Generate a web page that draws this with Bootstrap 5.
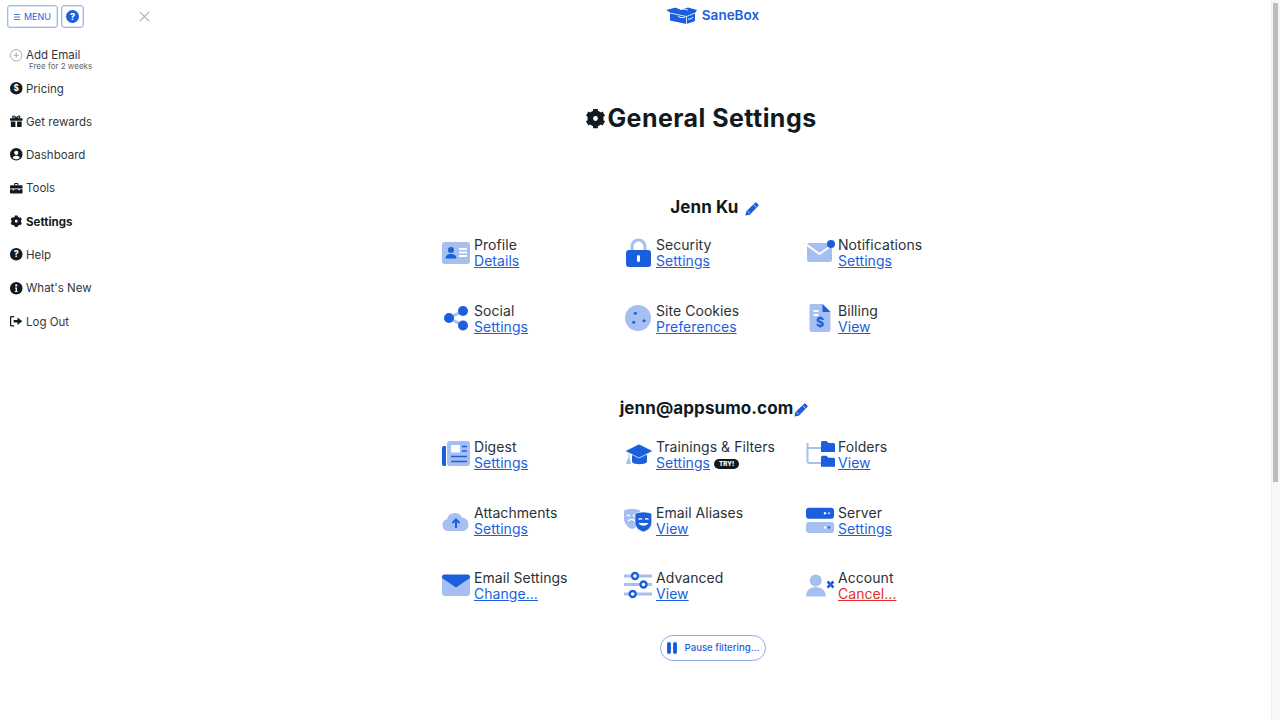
<!DOCTYPE html>
<html lang="en">
<head>
  <meta charset="UTF-8">
  <meta name="viewport" content="width=device-width, initial-scale=1">
  <title>General Settings | SaneBox</title>
  <link href="https://cdn.jsdelivr.net/npm/bootstrap@5.3.3/dist/css/bootstrap.min.css" rel="stylesheet">
  <style>
    html, body { height: 100%; overflow: hidden; }
    body { font-family: Inter, "Liberation Sans", sans-serif; color: #1c252b; background: #fff; }
    .page-wrap { height: 720px; }
    .side-menu { width: 155px; flex: none; padding: 5px 0 0 7px; }
    .main-area { flex: 1 1 auto; min-width: 0; }
    .fake-scroll { width: 9px; flex: none; background: #f7f7f7; border-left: 1px solid #ececec; padding: 3px 2px 0 1px; }
    .fake-scroll div { height: 479px; background: #bdbdbd; }
    .top-btn { height: 23px; border: 1px solid #9db9ef; border-radius: 3px; background: #fff; color: #1b5fdc; font-size: 9px; box-shadow: 0 0 0 1px #dde7fa inset; }
    .menu-btn { width: 51px; }
    .menu-btn svg { margin-right: 4px; }
    .help-btn { width: 23px; margin-left: 3px; }
    .help-dot { width: 13px; height: 13px; border-radius: 50%; background: #1b5fdc; color: #fff; font-size: 9px; font-weight: 800; line-height: 13px; text-align: center; }
    .close-x { margin-left: 55px; margin-top: 6px; }
    .side-list { margin: 14px 0 0 3px; }
    .side-link { display: flex; align-items: center; height: 33.3px; font-size: 11.5px; color: #30383e; text-decoration: none; }
    .side-link svg { width: 12.5px; height: 12.5px; flex: none; margin: 0 3.5px 2px 0; overflow: visible; }
    .side-link.first { height: 30.5px; align-items: flex-start; padding-top: 6px; line-height: 14px; }
    .side-link.first svg { margin-top: 1px; }
    .side-link.now { font-weight: 700; color: #111a20; }
    .free-note { font-size: 8px; color: #60676c; line-height: 8px; margin-left: 3px; }
    .logo-row { height: 31px; padding-top: 7px; padding-right: 1px; }
    .logo-name { font-size: 13.5px; font-weight: 600; color: #1b5fdc; margin-left: 5px; line-height: 17px; }
    .page-title { font-size: 25px; font-weight: 700; color: #111a20; margin: 70px 24px 0 0; line-height: 35px; letter-spacing: .45px; }
    .page-title svg { width: 21px; height: 21px; margin: 0 1px 0 0; vertical-align: -2px; }
    .sect-head { font-size: 17px; font-weight: 700; color: #111a20; line-height: 22px; letter-spacing: .1px; text-align: center; }
    .pen-ic { width: 14px; height: 14px; vertical-align: -3px; color: #1b5fdc; }
    .head-one { margin-top: 60px; padding-left: 3px; }
    .head-one .pen-ic { margin-left: 2px; }
    .head-two { margin-top: 29px; padding-left: 2px; }
    .head-two .pen-ic { margin-left: 1px; }
    .grid-box { width: 546px; margin: 19px auto 0; position: relative; left: 2px; }
    .grid-two { margin-top: 20px; }
    .set-item { height: 65.5px; display: flex; font-size: 14px; line-height: 16.3px; color: #2a3238; letter-spacing: .05px; }
    .set-item svg { width: 28px; height: 28px; flex: none; margin: 2px 4px 0 0; overflow: visible; }
    .set-item a { color: #1b5fdc; display: inline-block; }
    .set-item a.bad { color: #e0332b; }
    .try-tag { display: inline-block; background: #111a20; color: #fff; font-size: 6.3px; font-weight: 800; border-radius: 6px; padding: 0 5px; line-height: 10px; vertical-align: 2px; margin-left: 0; letter-spacing: 0; }
    .pause-btn { width: 106px; height: 26px; border: 1px solid #8fb0ec; border-radius: 13px; background: #fff; color: #1b5fdc; font-size: 9.6px; font-weight: 500; padding: 0; margin-top: -10px; }
    .pause-bar { width: 4px; height: 12px; border-radius: 2px; background: #1b5fdc; margin-right: 2px; }
    .pause-label { padding-top: 1px; }
  </style>
</head>
<body>

<svg width="0" height="0" class="position-absolute">
  <defs>
    <symbol id="gear" viewBox="0 0 24 24"><circle cx="12" cy="12" r="6" fill="none" stroke="currentColor" stroke-width="6.5"/><g stroke="currentColor" stroke-width="5.5"><path d="M12 1v5M12 18v5M2.5 6.5l4.3 2.5M17.2 15l4.3 2.5M2.500 17.500L6.800 15M17.2 9l4.3-2.500"/></g></symbol>
    <symbol id="pencil" viewBox="0 0 16 16"><path d="M.5 15.500l1-5L11.500.8a1.200 1.200 0 0 1 1.700 0l2 2a1.200 1.200 0 0 1 0 1.700L5.500 14.500z" fill="currentColor"/><path d="M9.800 2.800l3.400 3.400M3 10.500l2.500 2.500" stroke="#fff" stroke-width=".8"/></symbol>
  </defs>
</svg>

<div class="page-wrap d-flex">
  <!-- left menu -->
  <aside class="side-menu">
    <div class="d-flex align-items-start">
      <button class="top-btn menu-btn d-flex align-items-center justify-content-center p-0" type="button"><svg width="6" height="6" viewBox="0 0 6 6"><path d="M0 .5h6M0 3h6M0 5.500h6" stroke="#1b5fdc" stroke-width=".8"/></svg>MENU</button>
      <button class="top-btn help-btn d-flex align-items-center justify-content-center p-0" type="button"><span class="help-dot">?</span></button>
      <svg class="close-x" width="11" height="11" viewBox="0 0 11 11"><path d="M.8.800l9.400 9.400M10.200.800.800 10.200" stroke="#a9adb0" stroke-width="1.100"/></svg>
    </div>
    <nav class="side-list">
      <a class="side-link first" href="#">
        <svg viewBox="0 0 12 12"><circle cx="6" cy="6" r="5.500" fill="none" stroke="#8c9195" stroke-width=".7"/><path d="M6 3.500v5M3.500 6h5" stroke="#8c9195" stroke-width=".7"/></svg>
        <span>Add Email<div class="free-note">Free for 2 weeks</div></span>
      </a>
      <a class="side-link" href="#">
        <svg viewBox="0 0 12 12"><circle cx="6" cy="6" r="6" fill="#111a20"/><text x="6" y="8.800" font-size="8" font-weight="700" fill="#fff" text-anchor="middle">$</text></svg>Pricing
      </a>
      <a class="side-link" href="#">
        <svg viewBox="0 0 12 12" fill="#111a20"><rect x="0" y="3" width="12" height="2.500" rx=".4"/><path d="M.8 6.300h4.400V11.500H1.500a.7.700 0 0 1-.7-.7zM6.800 6.300h4.400v4.500a.7.700 0 0 1-.7.700H6.800z"/><path d="M6 3C4.500.300 2.500.500 2.500 1.800S4.500 3 6 3c1.500 0 3.500.100 3.500-1.200S7.500.300 6 3z" fill="none" stroke="#111a20" stroke-width="1"/></svg>Get rewards
      </a>
      <a class="side-link" href="#">
        <svg viewBox="0 0 12 12"><circle cx="6" cy="6" r="6" fill="#111a20"/><circle cx="6" cy="4.600" r="2" fill="#fff"/><path d="M2.600 9.400C3.300 7.800 4.500 7.400 6 7.400s2.700.400 3.400 2C8.500 10.400 7.300 10.900 6 10.900s-2.500-.500-3.400-1.500z" fill="#fff"/></svg>Dashboard
      </a>
      <a class="side-link" href="#">
        <svg viewBox="0 0 12 12" fill="#111a20"><path d="M4 3V1.800C4 1.300 4.300 1 4.800 1h2.400c.500 0 .800.300.800.800V3H7V2H5v1z"/><path d="M1.200 3h9.600c.700 0 1.200.500 1.200 1.200v2H0v-2C0 3.500.500 3 1.200 3zM0 7h2.500v1h1.500V7h4v1h1.500V7H12v3.200c0 .400-.400.800-.8.800H.800C.400 11 0 10.600 0 10.200z"/></svg>Tools
      </a>
      <a class="side-link now" href="#"><svg><use href="#gear"/></svg>Settings</a>
      <a class="side-link" href="#">
        <svg viewBox="0 0 12 12"><circle cx="6" cy="6" r="6" fill="#111a20"/><text x="6" y="9" font-size="8.500" font-weight="800" fill="#fff" text-anchor="middle">?</text></svg>Help
      </a>
      <a class="side-link" href="#">
        <svg viewBox="0 0 12 12"><circle cx="6" cy="6" r="6" fill="#111a20"/><circle cx="6" cy="3.300" r="1.100" fill="#fff"/><path d="M4.800 5.200h1.900v3.400h.7v1H4.700v-1h.7V6.200h-.6z" fill="#fff"/></svg>What's New
      </a>
      <a class="side-link" href="#">
        <svg viewBox="0 0 12 12" fill="none"><path d="M4 1.500H1.300C.8 1.500.6 1.800.6 2.200v7.600c0 .4.200.7.700.7H4" stroke="#111a20" stroke-width="1.200"/><path d="M3.500 4.700h3.700V2.500L11.800 6 7.200 9.500V7.300H3.500z" fill="#111a20"/></svg>Log Out
      </a>
    </nav>
  </aside>

  <main class="main-area text-center">
    <div class="logo-row d-flex justify-content-center">
      <svg width="31" height="17" viewBox="0 0 31 17">
        <path d="M0 3 10 .5 15 3l7-2.500L31 3l-2 3v8l-8.500 3L4 13.500V6z" fill="#1b5fdc"/>
        <path d="M0 3l4 3 16.500 3.500M20.500 9.500 29 6M20.500 9.500V17M10 .5 22 3" stroke="#fff" stroke-width=".8" fill="none"/>
        <path d="M12 9c2 2 5 2 7 1M22 12c2 .4 4-.4 5-2" stroke="#fff" stroke-width="1" fill="none"/>
      </svg>
      <span class="logo-name">SaneBox</span>
    </div>

    <h1 class="page-title"><svg><use href="#gear"/></svg>General Settings</h1>

    <div class="sect-head head-one">Jenn Ku <svg class="pen-ic"><use href="#pencil"/></svg></div>
    <div class="grid-box text-start">
      <div class="row g-0">
        <div class="col-4"><div class="set-item">
          <svg viewBox="0 0 28 28"><rect y="3" width="28" height="22" rx="3" fill="#a5bff0"/><circle cx="9" cy="11" r="3" fill="#1b5fdc"/><path d="M3.500 19.500c.5-3.500 2.500-4.500 5.500-4.500s5 1 5.500 4.500z" fill="#1b5fdc"/><path d="M17 10h8M17 13.500h8M17 17h8" stroke="#fff" stroke-width="1.800"/></svg>
          <div>Profile<br><a href="#">Details</a></div>
        </div></div>
        <div class="col-4"><div class="set-item">
          <svg viewBox="0 0 28 28"><path d="M8 13V7.500a6.500 6.500 0 0 1 13 0V13" fill="none" stroke="#a5bff0" stroke-width="3"/><rect x="2" y="11" width="25" height="17" rx="3" fill="#1b5fdc"/><rect x="13" y="16" width="3" height="7" rx="1.500" fill="#fff"/></svg>
          <div>Security<br><a href="#">Settings</a></div>
        </div></div>
        <div class="col-4"><div class="set-item">
          <svg viewBox="0 0 28 28"><rect x="1" y="4" width="25" height="19" rx="2.500" fill="#a5bff0"/><path d="M1 6l12.500 9L26 6" fill="none" stroke="#fff" stroke-width="2"/><circle cx="25" cy="5" r="4" fill="#1b5fdc"/></svg>
          <div>Notifications<br><a href="#">Settings</a></div>
        </div></div>
        <div class="col-4"><div class="set-item">
          <svg viewBox="0 0 28 28"><path d="M7 13 21 6M7 13l14 7.500" stroke="#a5bff0" stroke-width="3"/><circle cx="7" cy="13" r="5" fill="#1b5fdc"/><circle cx="21" cy="6" r="5" fill="#1b5fdc"/><circle cx="21" cy="20.500" r="5" fill="#1b5fdc"/></svg>
          <div>Social<br><a href="#">Settings</a></div>
        </div></div>
        <div class="col-4"><div class="set-item">
          <svg viewBox="0 0 28 28"><circle cx="14" cy="13" r="13" fill="#a5bff0"/><circle cx="11.300" cy="8.300" r="1.500" fill="#1b5fdc"/><circle cx="20" cy="15.700" r="1.500" fill="#1b5fdc"/><circle cx="9.700" cy="17.300" r="1.500" fill="#1b5fdc"/></svg>
          <div>Site Cookies<br><a href="#">Preferences</a></div>
        </div></div>
        <div class="col-4"><div class="set-item">
          <svg viewBox="0 0 28 28"><g transform="translate(-.5 -1)"><path d="M6 0h11l8 8v18a2 2 0 0 1-2 2H6a2 2 0 0 1-2-2V2a2 2 0 0 1 2-2z" fill="#a5bff0"/><path d="M17 0l8 8h-8z" fill="#1b5fdc"/><path d="M8 7h5M8 11h5" stroke="#fff" stroke-width="1.800"/><text x="14.500" y="23" font-size="13" font-weight="700" fill="#1b5fdc" text-anchor="middle">$</text></g></svg>
          <div>Billing<br><a href="#">View</a></div>
        </div></div>
      </div>
    </div>

    <div class="sect-head head-two">jenn@appsumo.com<svg class="pen-ic"><use href="#pencil"/></svg></div>
    <div class="grid-box grid-two text-start">
      <div class="row g-0">
        <div class="col-4"><div class="set-item">
          <svg viewBox="0 0 28 28"><rect x="5" y="0" width="23" height="25" rx="3" fill="#a5bff0"/><path d="M4 5H2a2 2 0 0 0-2 2v16a2 2 0 0 0 2 2h2z" fill="#1b5fdc"/><rect x="9" y="4" width="9" height="7.500" rx="1" fill="#fff"/><path d="M20 5.500h5M20 10h5M9 15.500h16M9 20.500h16" stroke="#1b5fdc" stroke-width="1.500"/></svg>
          <div>Digest<br><a href="#">Settings</a></div>
        </div></div>
        <div class="col-4"><div class="set-item">
          <svg viewBox="0 0 28 28"><g transform="translate(1 0)"><path d="M3.500 12v4l-2.500 7h5l-1.500-7v-4z" fill="#a5bff0"/><path d="M7 14h15v7c-2 3-13 3-15 0z" fill="#1b5fdc"/><path d="M0 10 14 3l14 7-14 7z" fill="#1b5fdc" stroke="#fff" stroke-width=".7"/></g></svg>
          <div>Trainings &amp; Filters<br><a href="#">Settings</a> <span class="try-tag">TRY!</span></div>
        </div></div>
        <div class="col-4"><div class="set-item">
          <svg viewBox="0 0 28 28"><path d="M1.500 2v18a2 2 0 0 0 2 2H15M1.500 7H15" fill="none" stroke="#a5bff0" stroke-width="2"/><path d="M15 1.500A1.500 1.500 0 0 1 16.500 0h4l2 2h5A1.500 1.500 0 0 1 29 3.500V11H15z" fill="#1b5fdc"/><path d="M15 16.200a1.500 1.500 0 0 1 1.500-1.500h4l2 2h5a1.500 1.500 0 0 1 1.500 1.500V25.700H15z" fill="#1b5fdc"/></svg>
          <div>Folders<br><a href="#">View</a></div>
        </div></div>
        <div class="col-4"><div class="set-item">
          <svg viewBox="0 0 28 28"><path d="M6 24a6 6 0 0 1-1-11.800A8 8 0 0 1 20 10.500 7 7 0 0 1 22 24z" fill="#a5bff0"/><path d="M14 21v-8M10.500 16l3.500-3.500 3.500 3.500" fill="none" stroke="#1b5fdc" stroke-width="2"/></svg>
          <div>Attachments<br><a href="#">Settings</a></div>
        </div></div>
        <div class="col-4"><div class="set-item">
          <svg viewBox="0 0 28 28"><path d="M0 3.500c5-2.400 11-2.400 16 0v8c0 5-4 9.500-8 10.500-4-1-8-5.500-8-10.500z" fill="#a5bff0"/><path d="M3 8.500h3M9 8.500h3M4 14c2-2 5-2 7 0" stroke="#fff" stroke-width="1.300" fill="none"/><path d="M11 6.500c5.500-2 11-2 16.700 0v9c0 4.500-3.500 8-8.300 9.500-4.800-1.500-8.400-5-8.400-9.500z" fill="#1b5fdc" stroke="#fff" stroke-width=".6"/><path d="M14.500 12.500c1-1 2.500-1 3.500 0M21 12.500c1-1 2.500-1 3.500 0" stroke="#fff" stroke-width="1.200" fill="none"/><path d="M14.500 16c2 3.500 8 3.500 10 0z" fill="#fff"/></svg>
          <div>Email Aliases<br><a href="#">View</a></div>
        </div></div>
        <div class="col-4"><div class="set-item">
          <svg viewBox="0 0 28 28"><rect y=".7" width="28" height="11" rx="3" fill="#1b5fdc"/><rect y="15" width="28" height="11" rx="3" fill="#a5bff0"/><circle cx="19" cy="6.200" r="1.200" fill="#fff"/><circle cx="23" cy="6.200" r="1.200" fill="#a5bff0"/><circle cx="19" cy="20.500" r="1.200" fill="#fff"/><circle cx="23" cy="20.500" r="1.200" fill="#1b5fdc"/></svg>
          <div>Server<br><a href="#">Settings</a></div>
        </div></div>
        <div class="col-4"><div class="set-item">
          <svg viewBox="0 0 28 28"><rect y="3" width="28" height="21" rx="3" fill="#a5bff0"/><path d="M0 5a2.500 2.500 0 0 1 2.500-2.500h23A2.500 2.500 0 0 1 28 5v1L14 15.500 0 6z" fill="#1b5fdc"/></svg>
          <div>Email Settings<br><a href="#">Change...</a></div>
        </div></div>
        <div class="col-4"><div class="set-item">
          <svg viewBox="0 0 28 28" fill="#fff" stroke="#1b5fdc" stroke-width="2.400"><path d="M0 4h28M0 12.500h28M0 22h28" stroke="#a5bff0" stroke-width="2.800"/><circle cx="11" cy="4" r="3"/><circle cx="19.500" cy="12.500" r="3"/><circle cx="8.700" cy="22" r="3"/></svg>
          <div>Advanced<br><a href="#">View</a></div>
        </div></div>
        <div class="col-4"><div class="set-item">
          <svg viewBox="0 0 28 28"><circle cx="9.700" cy="8.500" r="6" fill="#a5bff0"/><path d="M0 24.500c0-6 4-9.500 9.700-9.500s10 3.500 10 9.500z" fill="#a5bff0"/><path d="M21.500 9.500l6 6M27.500 9.500l-6 6" stroke="#1b5fdc" stroke-width="2.500"/></svg>
          <div>Account<br><a class="bad" href="#">Cancel...</a></div>
        </div></div>
      </div>
    </div>

    <button class="pause-btn d-inline-flex align-items-center justify-content-center" type="button"><span class="pause-bar"></span><span class="pause-bar me-2"></span><span class="pause-label">Pause filtering...</span></button>
  </main>

  <div class="fake-scroll"><div></div></div>
</div>

<script src="https://cdn.jsdelivr.net/npm/bootstrap@5.3.3/dist/js/bootstrap.bundle.min.js"></script>
</body>
</html>
